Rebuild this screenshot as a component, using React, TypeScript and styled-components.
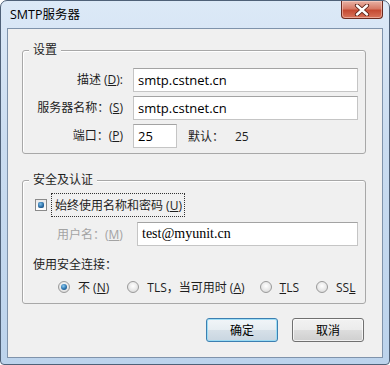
import React from "react";
import styled, { createGlobalStyle } from "styled-components";

const GlobalStyle = createGlobalStyle`
  html, body {
    margin: 0;
    padding: 0;
    background: #ffffff;
  }
  body {
    font-family: "Open Sans", "Noto Sans CJK SC", sans-serif;
    font-size: 12px;
    color: #1e1e1e;
  }
`;

const Window = styled.div`
  box-sizing: border-box;
  width: 390px;
  height: 365px;
  border: 1px solid #4f6178;
  border-radius: 7px 7px 4px 4px;
  background: linear-gradient(180deg, #dce9f7 0%, #cadcf0 40%, #bcd3ec 100%);
  display: flex;
  flex-direction: column;
  padding: 0 6px 6px;
  overflow: hidden;
`;

const TitleBar = styled.div`
  height: 27px;
  display: flex;
  align-items: flex-start;
  padding-left: 3px;
`;

const Title = styled.span`
  font-size: 12.5px;
  line-height: 28px;
  color: #000;
`;

const CloseButton = styled.div`
  box-sizing: border-box;
  margin-left: auto;
  width: 42px;
  height: 18px;
  border: 1px solid #6b2a1f;
  border-top: none;
  border-radius: 0 0 4px 4px;
  background: linear-gradient(180deg, #e9b2a5 0%, #d77a66 45%, #c54a32 55%, #d8735a 100%);
  display: flex;
  align-items: center;
  justify-content: center;
  box-shadow: inset 0 0 0 1px rgba(255, 220, 210, 0.5);
`;

const Client = styled.div`
  flex: 1;
  border: 1px solid #7f93ab;
  background: #f0f0f0;
  display: flex;
  flex-direction: column;
`;

const Group = styled.div<{ $top: number; $height: number }>`
  position: relative;
  box-sizing: border-box;
  margin: ${(p) => p.$top}px 16px 0 14px;
  height: ${(p) => p.$height}px;
  border: 1px solid #a8a8a8;
  border-radius: 3px;
  box-shadow: inset 1px 1px 0 #ffffff;
`;

const Legend = styled.span`
  position: absolute;
  top: -9px;
  left: 6px;
  padding: 0 4px;
  background: #f0f0f0;
  line-height: 16px;
  font-size: 12px;
`;

const SettingsGrid = styled.div`
  display: grid;
  grid-template-columns: 100px 1fr;
  column-gap: 10px;
  row-gap: 4px;
  padding: 17px 7px 4px 0;
`;

const FieldLabel = styled.label`
  text-align: right;
  line-height: 24px;
  white-space: nowrap;
`;

const TextBox = styled.div<{ $serif?: boolean; $width?: number }>`
  box-sizing: border-box;
  height: 24px;
  width: ${(p) => (p.$width ? `${p.$width}px` : "auto")};
  flex: ${(p) => (p.$width ? "none" : "1")};
  background: #ffffff;
  border: 1px solid #c5c5c5;
  border-top-color: #a3a3a3;
  padding-left: 4px;
  display: flex;
  align-items: center;
  font-family: ${(p) =>
    p.$serif ? '"Liberation Serif", serif' : '"Open Sans", sans-serif'};
  font-size: ${(p) => (p.$serif ? "14px" : "13px")};
  color: #000;
`;

const PortCell = styled.div`
  display: flex;
  align-items: center;
`;

const DefaultLabel = styled.span`
  margin-left: 11px;
  width: 47px;
`;

const GroupBody = styled.div`
  display: flex;
  flex-direction: column;
  padding-top: 12px;
`;

const CheckRow = styled.div`
  display: flex;
  align-items: center;
  height: 24px;
  padding-left: 12px;
`;

const CheckBox = styled.span`
  box-sizing: border-box;
  width: 12px;
  height: 12px;
  border: 1px solid #8a8a8a;
  background: linear-gradient(180deg, #e9e9e9, #ffffff);
  display: flex;
  align-items: center;
  justify-content: center;
  &::after {
    content: "";
    width: 6px;
    height: 6px;
    border-radius: 2px;
    background: radial-gradient(circle at 40% 35%, #7fc0ea 0%, #2b6ea6 55%, #163f66 100%);
  }
`;

const FocusLabel = styled.span`
  margin-left: 4px;
  height: 22px;
  padding: 0 2px 0 3px;
  border: 1px dotted #333;
  display: flex;
  align-items: center;
`;

const UserRow = styled.div`
  display: flex;
  align-items: center;
  margin-top: 5px;
  padding: 0 7px 0 34px;
`;

const DisabledLabel = styled.span`
  width: 80px;
  color: #a3a3a3;
  white-space: nowrap;
`;

const PlainLabel = styled.div`
  margin-top: 10px;
  padding-left: 10px;
  line-height: 18px;
`;

const RadioRow = styled.div`
  display: flex;
  align-items: center;
  height: 18px;
  margin-top: 4px;
  padding-left: 35px;
`;

const RadioItem = styled.label<{ $gap: number }>`
  display: flex;
  align-items: center;
  margin-right: ${(p) => p.$gap}px;
  white-space: nowrap;
`;

const RadioDot = styled.span<{ $checked?: boolean }>`
  box-sizing: border-box;
  width: 12px;
  height: 12px;
  border-radius: 50%;
  border: 1px solid #9a9a9a;
  background: radial-gradient(circle at 50% 40%, #ffffff 0%, #e6e6e6 60%, #cfcfcf 100%);
  margin-right: 8px;
  display: flex;
  align-items: center;
  justify-content: center;
  &::after {
    content: "";
    display: ${(p) => (p.$checked ? "block" : "none")};
    width: 6px;
    height: 6px;
    border-radius: 50%;
    background: radial-gradient(circle at 40% 35%, #8ccbf0 0%, #2a72ad 55%, #17466f 100%);
  }
`;

const ButtonRow = styled.div`
  display: flex;
  justify-content: flex-end;
  gap: 14px;
  margin-top: 14px;
  padding-right: 18px;
`;

const Button = styled.button<{ $default?: boolean }>`
  box-sizing: border-box;
  width: 72px;
  height: 24px;
  border: 1px solid ${(p) => (p.$default ? "#3c7fb1" : "#707070")};
  border-radius: 3px;
  background: ${(p) =>
    p.$default
      ? "linear-gradient(180deg, #f1f5f8 0%, #e6edf2 50%, #d6e0e8 51%, #c9d6e1 100%)"
      : "linear-gradient(180deg, #f2f2f2 0%, #ebebeb 50%, #dddddd 51%, #cfcfcf 100%)"};
  box-shadow: inset 0 0 0 1px
    ${(p) => (p.$default ? "rgba(150, 220, 245, 0.9)" : "rgba(255, 255, 255, 0.7)")};
  font-family: "Open Sans", "Noto Sans CJK SC", sans-serif;
  font-size: 12px;
  color: #000;
  padding: 0;
`;

export default function App() {
  return (
    <>
      <GlobalStyle />
      <Window>
        <TitleBar>
          <Title>SMTP服务器</Title>
          <CloseButton>
            <svg width="16" height="12" viewBox="0 0 16 12">
              <path
                d="M3 1.5 L13 10.5 M13 1.5 L3 10.5"
                stroke="#5a1f14"
                strokeWidth="4.2"
                strokeLinecap="round"
              />
              <path
                d="M3 1.5 L13 10.5 M13 1.5 L3 10.5"
                stroke="#ffffff"
                strokeWidth="2.4"
                strokeLinecap="round"
              />
            </svg>
          </CloseButton>
        </TitleBar>
        <Client>
          <Group $top={21} $height={104}>
            <Legend>设置</Legend>
            <SettingsGrid>
              <FieldLabel>
                描述 (<u>D</u>):
              </FieldLabel>
              <TextBox>smtp.cstnet.cn</TextBox>
              <FieldLabel>
                服务器名称：(<u>S</u>)
              </FieldLabel>
              <TextBox>smtp.cstnet.cn</TextBox>
              <FieldLabel>
                端口：(<u>P</u>)
              </FieldLabel>
              <PortCell>
                <TextBox $width={44}>25</TextBox>
                <DefaultLabel>默认：</DefaultLabel>
                <span>25</span>
              </PortCell>
            </SettingsGrid>
          </Group>
          <Group $top={26} $height={124}>
            <Legend>安全及认证</Legend>
            <GroupBody>
              <CheckRow>
                <CheckBox />
                <FocusLabel>
                  始终使用名称和密码 (<u>U</u>)
                </FocusLabel>
              </CheckRow>
              <UserRow>
                <DisabledLabel>
                  用户名：(<u>M</u>)
                </DisabledLabel>
                <TextBox $serif>test@myunit.cn</TextBox>
              </UserRow>
              <PlainLabel>使用安全连接：</PlainLabel>
              <RadioRow>
                <RadioItem $gap={18}>
                  <RadioDot $checked />
                  不 (<u>N</u>)
                </RadioItem>
                <RadioItem $gap={15}>
                  <RadioDot />
                  TLS，当可用时 (<u>A</u>)
                </RadioItem>
                <RadioItem $gap={17}>
                  <RadioDot />
                  <u>T</u>LS
                </RadioItem>
                <RadioItem $gap={0}>
                  <RadioDot />
                  SS<u>L</u>
                </RadioItem>
              </RadioRow>
            </GroupBody>
          </Group>
          <ButtonRow>
            <Button $default>确定</Button>
            <Button>取消</Button>
          </ButtonRow>
        </Client>
      </Window>
    </>
  );
}
